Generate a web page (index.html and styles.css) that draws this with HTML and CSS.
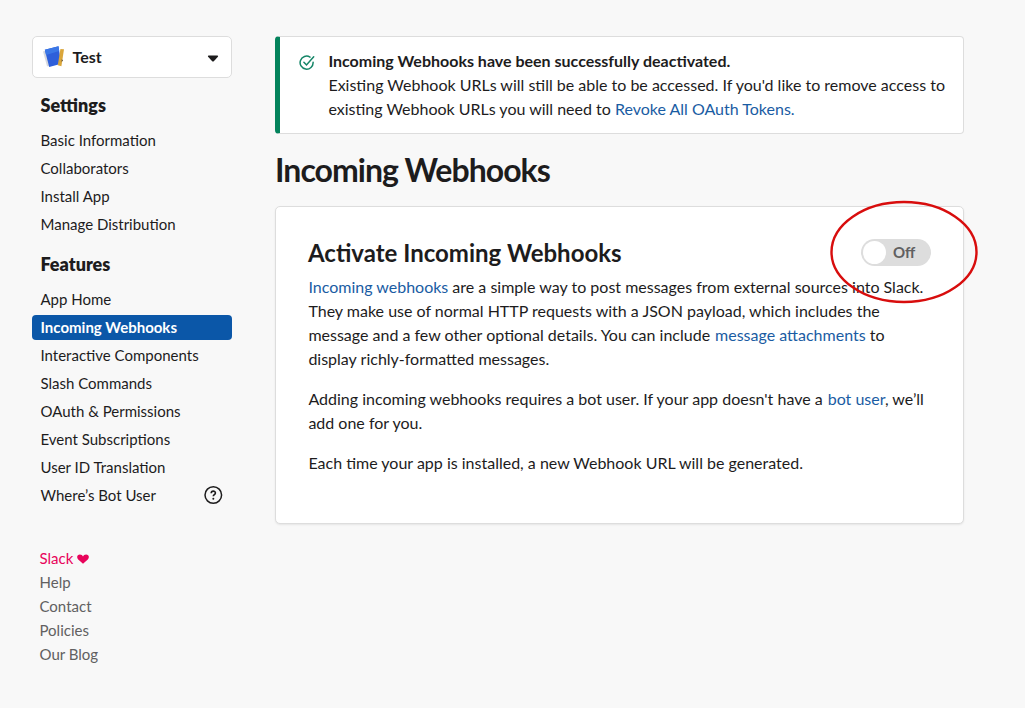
FILE: index.html
```html
<!DOCTYPE html>
<html lang="en">
<head>
<meta charset="utf-8">
<title>Incoming Webhooks</title>
<link rel="stylesheet" href="styles.css">
</head>
<body>
<div class="page">
  <aside class="sidebar">
    <div class="app-select">
      <svg class="app-icon" width="22" height="22" viewBox="0 0 22 22">
        <path d="M0 5.500 3 4.500 7.500 20.300 4 20.300Z" fill="#d5d8df"/>
        <path d="M1.800 3.800 15.500.3 18.200 17.800 6.200 21Z" fill="#2e5fda"/>
        <path d="M1.800 3.800 15.500.3 16.200 5 3 9Z" fill="#3b77e6"/>
        <path d="M17.400 3 21 3.300 18.400 20.300 14.800 19.300Z" fill="#daa63b"/>
        <path d="M18.800 13 20 14.800 18.600 15.800Z" fill="#4b4033"/>
      </svg>
      <span class="app-name">Test</span>
      <svg class="caret" width="12" height="7" viewBox="0 0 12 7"><path d="M1.500.5h9q1 .3.400 1.200L6.800 6.200q-.8.6-1.600 0L1.100 1.700Q.5.8 1.500.5Z" fill="#1d1c1d"/></svg>
    </div>
    <h2 class="nav-title">Settings</h2>
    <nav class="nav">
      <a class="nav-item"><span>Basic Information</span></a>
      <a class="nav-item"><span>Collaborators</span></a>
      <a class="nav-item"><span>Install App</span></a>
      <a class="nav-item"><span>Manage Distribution</span></a>
    </nav>
    <h2 class="nav-title features">Features</h2>
    <nav class="nav">
      <a class="nav-item"><span>App Home</span></a>
      <a class="nav-item active"><span>Incoming Webhooks</span></a>
      <a class="nav-item"><span>Interactive Components</span></a>
      <a class="nav-item"><span>Slash Commands</span></a>
      <a class="nav-item"><span>OAuth &amp; Permissions</span></a>
      <a class="nav-item"><span>Event Subscriptions</span></a>
      <a class="nav-item"><span>User ID Translation</span></a>
      <a class="nav-item"><span>Where’s Bot User</span>
        <svg width="20" height="20" viewBox="0 0 20 20" fill="none" stroke="#1d1c1d"><circle cx="10.300" cy="10" r="8.300" stroke-width="1.500"/><path d="M8.200 8.200C8.200 5.400 12.500 5.500 12.400 8c0 1.600-2.100 1.700-2.100 3.300" stroke-width="1.600"/><circle cx="10.300" cy="13.700" r="1" fill="#1d1c1d" stroke="none"/></svg>
      </a>
    </nav>
    <footer class="links">
      <a class="brand">Slack <svg width="12" height="10" viewBox="0 0 12 10"><path d="M6 9.800 1.200 5.400C-.9 3.300.4.5 2.900.5 4.500.5 5.500 1.400 6 2.500 6.500 1.400 7.500.5 9.100.5c2.500 0 3.800 2.800 1.700 4.900Z" fill="#e8045b"/></svg></a>
      <a>Help</a>
      <a>Contact</a>
      <a>Policies</a>
      <a>Our Blog</a>
    </footer>
  </aside>
  <main class="main">
    <section class="alert">
      <svg class="check" width="16" height="16" viewBox="0 0 16 16" fill="none" stroke="#148567" stroke-width="1.500" stroke-linecap="round"><path d="M11 2.100A6.500 6.500 0 1 0 14.100 7.300"/><path d="M4.900 7.200 7.500 10 14.700 1.700"/></svg>
      <div class="alert-text"><strong>Incoming Webhooks have been successfully deactivated.</strong><br>Existing Webhook URLs will still be able to be accessed. If you'd like to remove access to<br>existing Webhook URLs you will need to <a>Revoke All OAuth Tokens.</a></div>
    </section>
    <h1 class="title">Incoming Webhooks</h1>
    <section class="card">
      <div class="card-head">
        <h2 class="card-title">Activate Incoming Webhooks</h2>
        <div class="toggle"><span class="knob"></span><span class="toggle-label">Off</span></div>
      </div>
      <p><a>Incoming webhooks</a> are a simple way to post messages from external sources into Slack.<br>They make use of normal HTTP requests with a JSON payload, which includes the<br>message and a few other optional details. You can include <a class="inline-link">message attachments</a> to<br>display richly-formatted messages.</p>
      <p>Adding incoming webhooks requires a bot user. If your app doesn't have a <a class="inline-link">bot user</a>, we’ll<br>add one for you.</p>
      <p>Each time your app is installed, a new Webhook URL will be generated.</p>
      <svg class="annotation" width="150" height="104" viewBox="0 0 150 104"><ellipse cx="75" cy="52" rx="72.500" ry="50" fill="none" stroke="#d80d0d" stroke-width="2.400"/></svg>
    </section>
  </main>
</div>
</body>
</html>
```
FILE: styles.css
```css
* { box-sizing: border-box; }
body {
  margin: 0;
  background: #f8f8f8;
  color: #1d1c1d;
  font-family: Lato, "Open Sans", sans-serif;
  font-size: 16px;
  line-height: 24px;
}
h1, h2, p { margin: 0; }
a { color: #1a5ca3; }
.page { display: flex; gap: 43px; padding: 36px 61px 0 32px; height: 708px; overflow: hidden; }
.sidebar { width: 200px; flex: none; }
.app-select {
  display: flex;
  align-items: center;
  height: 42px;
  padding: 0 12px 0 10px;
  background: #fff;
  border: 1px solid #ddd;
  border-radius: 5px;
}
.app-name { margin-left: 7.500px; font-weight: 700; }
.caret { margin: 2px 0 0 auto; }
.nav-title { margin: 15px 0 10px 8.500px; font-size: 18px; line-height: 24px; font-weight: 800; }
.nav-title.features { margin-top: 16px; }
.nav { display: grid; gap: 3px; font-size: 15px; }
.nav-item {
  display: flex;
  align-items: center;
  justify-content: space-between;
  height: 25px;
  padding: 0 9px 0 8.500px;
  border-radius: 4px;
  color: #1d1c1d;
  white-space: nowrap;
}
.nav-item.active {
  margin: 1px 0 -1px;
  padding-bottom: 2px;
  background: #0b57a8;
  color: #fff;
  font-weight: 700;
}
.links { display: grid; margin: 39px 0 0 7.500px; font-size: 15px; line-height: 24px; }
.links a { color: #616061; }
.links .brand { color: #e8045b; }
.main { width: 689px; flex: none; }
.alert {
  display: flex;
  height: 98px;
  padding: 12px 0 0 19px;
  background: #fff;
  border: 1px solid #ddd;
  border-left: 5px solid #04835c;
  border-radius: 4px;
}
.check { margin: 6px 13.400px 0 0; flex: none; }
.alert-text { white-space: nowrap; }
.title { margin: 16px 0 16px; font-size: 32px; line-height: 40px; font-weight: 700; letter-spacing: -0.96px; white-space: nowrap; }
.card {
  position: relative;
  height: 318px;
  padding: 31px 32px;
  background: #fff;
  border: 1px solid #ddd;
  border-radius: 5px;
  box-shadow: 0 1px 2px rgba(0, 0, 0, .08);
}
.card p { margin: 0 0 16px 0.400px; white-space: nowrap; }
.inline-link { margin-left: 0.900px; }
.card-head { display: flex; align-items: flex-start; justify-content: space-between; height: 30px; margin-bottom: 7px; }
.card-title { font-size: 24px; line-height: 30px; font-weight: 700; white-space: nowrap; }
.toggle {
  display: flex;
  align-items: center;
  width: 70px;
  height: 27px;
  margin-top: 1px;
  padding: 0 2px;
  border-radius: 14px;
  background: #ddd;
}
.knob { width: 23px; height: 23px; border-radius: 50%; background: #fff; }
.toggle-label { margin-left: 7px; padding-bottom: 2px; color: #616061; font-size: 15px; font-weight: 700; }
.annotation { position: absolute; left: 553px; top: -7px; }
```
